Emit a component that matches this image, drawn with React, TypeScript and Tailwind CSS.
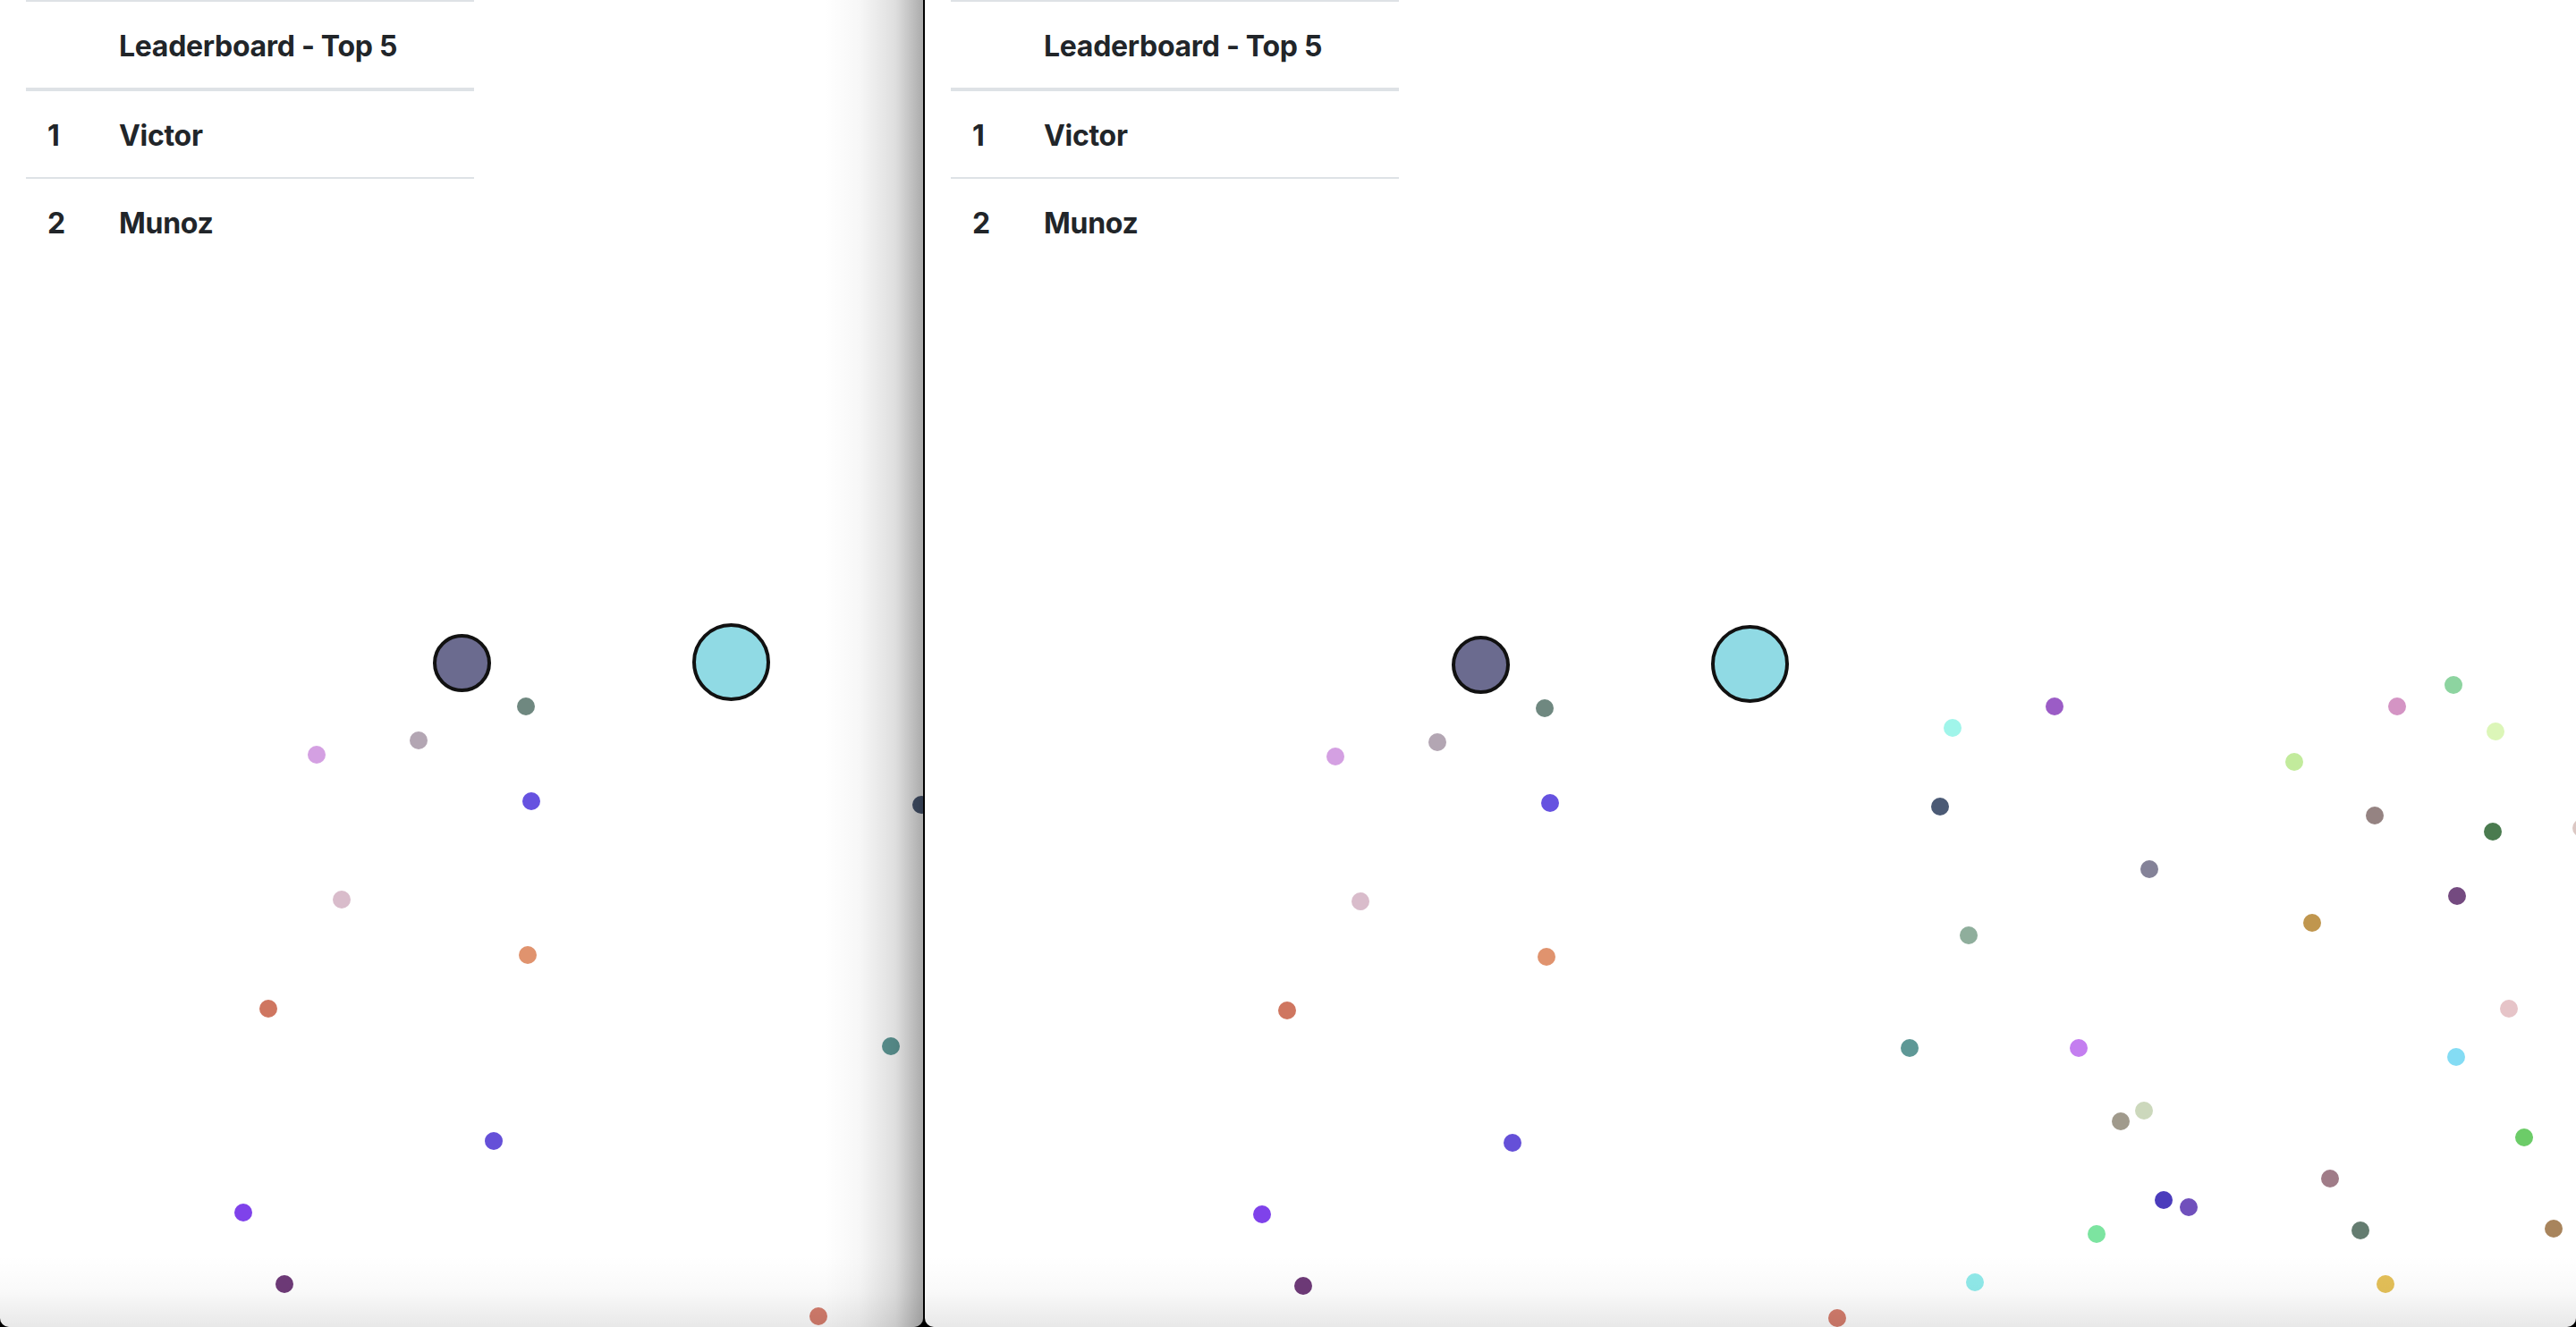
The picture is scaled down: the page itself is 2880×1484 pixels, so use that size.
type Dot = { x: number; y: number; c: string };

// world positions, in the right window's page coordinates
const food: Dot[] = [
  { x: 1493, y: 846, c: '#d4a0e2' },
  { x: 1607, y: 830, c: '#b3a6b3' },
  { x: 1521, y: 1008, c: '#d9bccb' },
  { x: 1727, y: 792, c: '#6f8880' },
  { x: 2183, y: 814, c: '#a0f5ea' },
  { x: 1733, y: 898, c: '#6652e0' },
  { x: 2169, y: 902, c: '#4b5a75' },
  { x: 2201, y: 1046, c: '#8fae9c' },
  { x: 1729, y: 1070, c: '#e0936e' },
  { x: 2297, y: 790, c: '#9b5cc6' },
  { x: 2680, y: 790, c: '#d494c4' },
  { x: 2743, y: 766, c: '#8dd4a0' },
  { x: 2790, y: 818, c: '#dcf6b8' },
  { x: 2565, y: 852, c: '#c2eb9c' },
  { x: 2655, y: 912, c: '#958382' },
  { x: 2787, y: 930, c: '#4a7b4f' },
  { x: 2886, y: 926, c: '#dcc8c4' },
  { x: 2403, y: 972, c: '#848298' },
  { x: 2747, y: 1002, c: '#744a80' },
  { x: 2585, y: 1032, c: '#c0964e' },
  { x: 1439, y: 1130, c: '#cf7660' },
  { x: 1411, y: 1358, c: '#7f42ea' },
  { x: 1457, y: 1438, c: '#6e3a78' },
  { x: 2135, y: 1172, c: '#5e9896' },
  { x: 1691, y: 1278, c: '#6550d8' },
  { x: 2208, y: 1434, c: '#90eaea' },
  { x: 2054, y: 1474, c: '#d67e6e' },
  { x: 2805, y: 1128, c: '#e6c4c8' },
  { x: 2324, y: 1172, c: '#c47ef0' },
  { x: 2746, y: 1182, c: '#84dcf4' },
  { x: 2397, y: 1242, c: '#ccd8bc' },
  { x: 2371, y: 1254, c: '#a09a8c' },
  { x: 2822, y: 1272, c: '#6ccc68' },
  { x: 2605, y: 1318, c: '#a07c88' },
  { x: 2419, y: 1342, c: '#4b3cbc' },
  { x: 2447, y: 1350, c: '#7050bc' },
  { x: 2344, y: 1380, c: '#7ce4a0' },
  { x: 2639, y: 1376, c: '#647c70' },
  { x: 2855, y: 1374, c: '#a8845c' },
  { x: 2667, y: 1436, c: '#e4c058' },
];

const players = [
  { x: 1655, y: 743, d: 65, c: '#6b6b8f' },
  { x: 1956, y: 742, d: 87, c: '#90dae4' },
];

const leaders = ['Victor', 'Munoz'];

function Leaderboard() {
  return (
    <div className="relative z-10 ml-[29px] w-[501px] border-t-2 border-[#dee2e6] text-[32px] font-bold tracking-[-0.3px] text-[#212529] [font-family:Inter,'Liberation_Sans',sans-serif]">
      <div className="flex h-[100px] items-center border-b-4 border-[#dee2e6] pt-[4px]">
        <div className="w-[80px]" />
        <div className="pl-[24px]">Leaderboard - Top 5</div>
      </div>
      {leaders.map((name, i) => (
        <div
          key={name}
          className={`flex items-center pt-[4px] ${i === 0 ? 'h-[98px] border-b-2 border-[#dee2e6]' : 'h-[96px]'}`}
        >
          <div className="w-[80px] pl-[24px]">{i + 1}</div>
          <div className="pl-[24px]">{name}</div>
        </div>
      ))}
    </div>
  );
}

function GameWindow({ dx, dy, shaded }: { dx: number; dy: number; shaded?: boolean }) {
  return (
    <div className="relative h-full overflow-hidden rounded-b-[10px] bg-white">
      <Leaderboard />

      {/* canvas */}
      <div className="pointer-events-none absolute inset-0">
        {food.map((f, i) => (
          <div
            key={i}
            className="absolute h-[20px] w-[20px] rounded-full"
            style={{ left: f.x - dx - 10, top: f.y - dy - 10, backgroundColor: f.c }}
          />
        ))}
        {players.map((p, i) => (
          <div
            key={i}
            className="absolute rounded-full border-4 border-[#111]"
            style={{ left: p.x - dx - p.d / 2, top: p.y - dy - p.d / 2, width: p.d, height: p.d, backgroundColor: p.c }}
          />
        ))}
      </div>

      {/* window shadows */}
      <div className="pointer-events-none absolute bottom-0 left-0 h-[80px] w-full bg-[linear-gradient(to_bottom,transparent,rgba(0,0,0,0.025)_50%,rgba(0,0,0,0.09))]" />
      {shaded && (
        <div className="pointer-events-none absolute right-0 top-0 h-full w-[110px] bg-[linear-gradient(to_right,transparent,rgba(0,0,0,0.03)_35%,rgba(0,0,0,0.13)_72%,rgba(0,0,0,0.33))]" />
      )}
    </div>
  );
}

export default function App() {
  return (
    <div className="flex h-[1484px] w-[2880px] gap-[2px] overflow-hidden bg-black">
      <div className="h-full w-[1032px] shrink-0">
        <GameWindow dx={1139} dy={2} shaded />
      </div>
      <div className="h-full flex-1">
        <GameWindow dx={1034} dy={0} />
      </div>
    </div>
  );
}
